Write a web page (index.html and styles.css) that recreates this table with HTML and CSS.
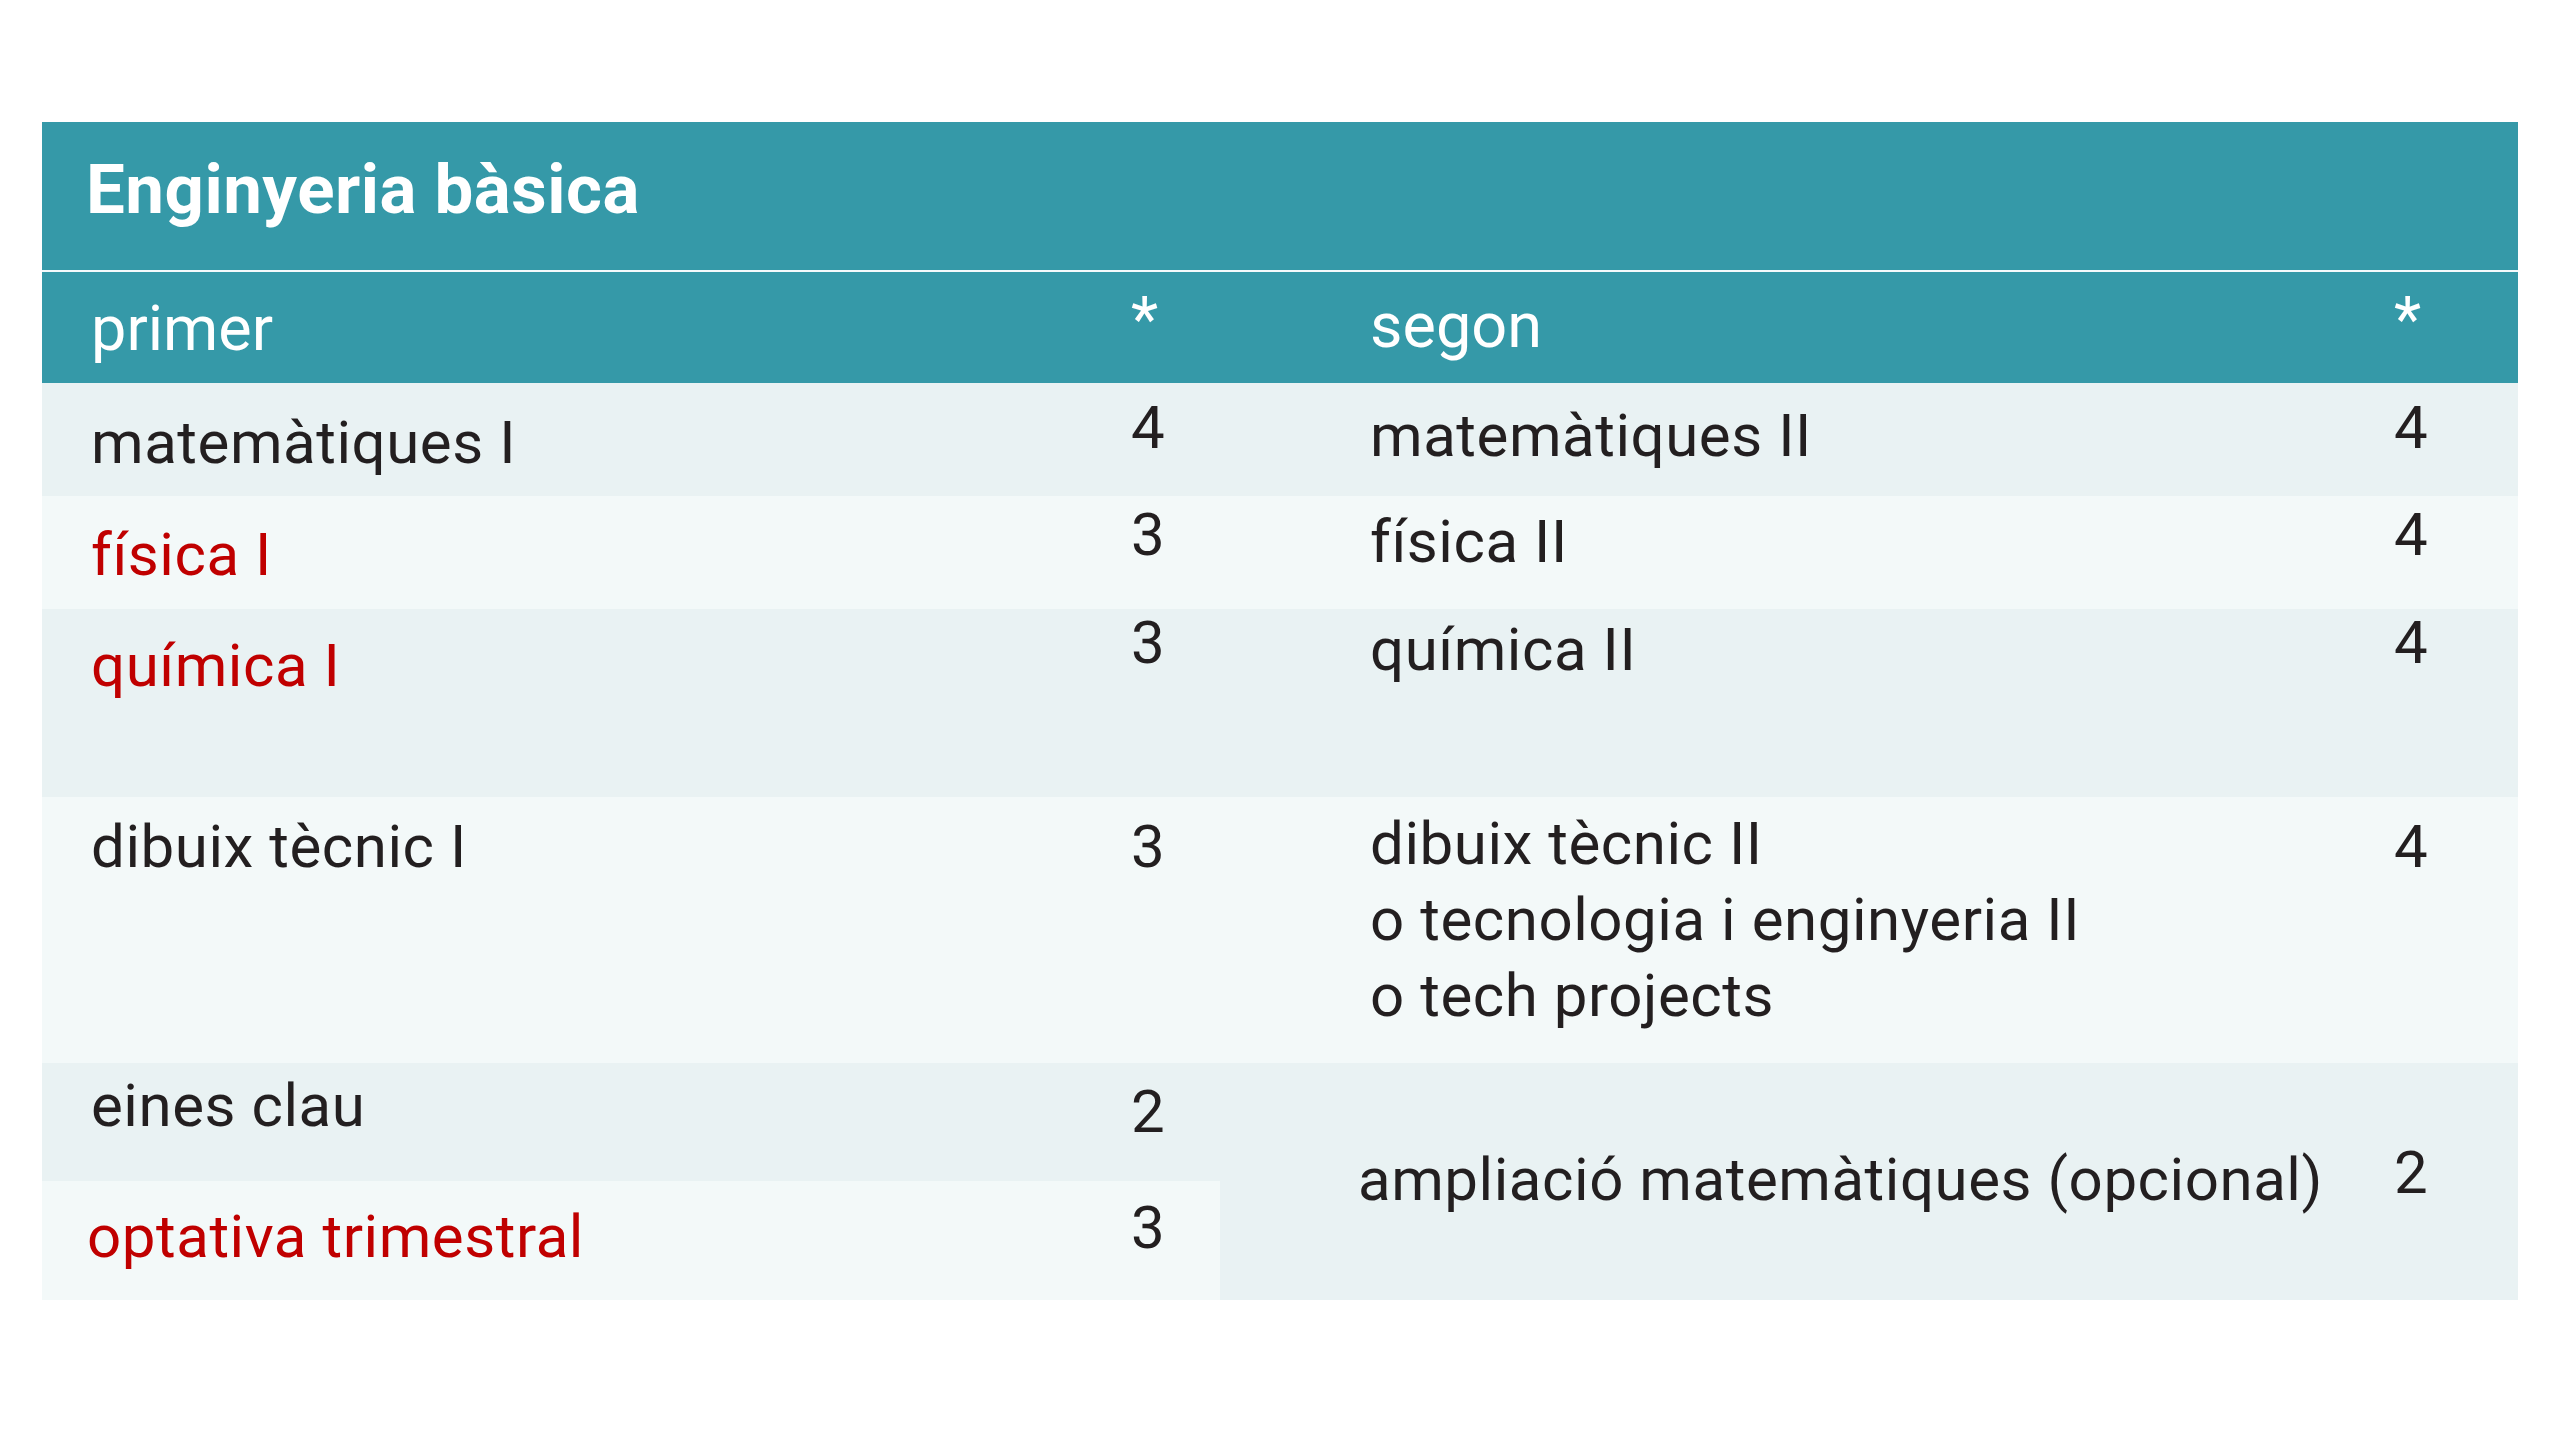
FILE: index.html
```html
<!DOCTYPE html>
<html lang="ca">
<head>
<meta charset="utf-8">
<title>Enginyeria bàsica</title>
<link rel="stylesheet" href="styles.css">
</head>
<body>
<section class="card">
  <h1 class="title">Enginyeria bàsica</h1>
  <div class="grid">
    <div class="hd txt-l p19">primer</div>
    <div class="hd num p10">*</div>
    <div class="hd txt-r p16">segon</div>
    <div class="hd num p10">*</div>

    <div class="c dark txt-l p22">matemàtiques I</div>
    <div class="c dark num p15">4</div>
    <div class="c dark txt-r p15">matemàtiques II</div>
    <div class="c dark num p15">4</div>

    <div class="c light txt-l red p21">física I</div>
    <div class="c light num p9">3</div>
    <div class="c light txt-r p8">física II</div>
    <div class="c light num p9">4</div>

    <div class="c dark txt-l red p19">química I</div>
    <div class="c dark num p4">3</div>
    <div class="c dark txt-r p3">química II</div>
    <div class="c dark num p4">4</div>

    <div class="c light txt-l p12">dibuix tècnic I</div>
    <div class="c light num p20">3</div>
    <div class="c light txt-r p9">dibuix tècnic II<br>o tecnologia i enginyeria II<br>o tech projects</div>
    <div class="c light num p20">4</div>

    <div class="c dark txt-l p5">eines clau</div>
    <div class="c dark num p19">2</div>
    <div class="c dark txt-amp span2 p79">ampliació matemàtiques (opcional)</div>
    <div class="c dark num span2 p80">2</div>

    <div class="c light txt-o red p18">optativa trimestral</div>
    <div class="c light num p17">3</div>
  </div>
</section>
</body>
</html>
```

FILE: styles.css
```css
html, body {
  margin: 0;
  padding: 0;
  background: #ffffff;
}

body {
  font-family: Roboto, "Liberation Sans", Arial, sans-serif;
  color: #231f20;
}

.card {
  width: 2476px;
  margin: 122px 0 0 42px;
}

.title {
  margin: 0;
  height: 150px;
  box-sizing: border-box;
  padding: 28px 0 0 44px;
  background: #3599a8;
  color: #ffffff;
  font-size: 69px;
  line-height: 80px;
  font-weight: 700;
  letter-spacing: 0.5px;
  border-bottom: 2px solid #f4fafb;
}

.grid {
  display: grid;
  grid-template-columns: 1068px 110px 1150px 148px;
  grid-template-rows: 111px 113px 113px 188px 266px 118px 119px;
}

.hd {
  background: #3599a8;
  color: #ffffff;
  font-size: 63px;
  line-height: 76px;
  letter-spacing: 0;
}

.c {
  font-size: 60px;
  line-height: 76px;
  letter-spacing: 0.55px;
}

.c.num {
  line-height: 60px;
  letter-spacing: 0;
}

.dark {
  background: #e9f2f3;
}

.light {
  background: #f3f9f9;
}

.red {
  color: #c00000;
}

.txt-l {
  padding-left: 49px;
}

.txt-o {
  padding-left: 45px;
}

.txt-r {
  padding-left: 150px;
}

.txt-amp {
  padding-left: 138px;
}

.num {
  padding-left: 21px;
}

.grid > .num:nth-child(4n) {
  padding-left: 24px;
}

.span2 {
  grid-row: span 2;
}

.grid > .span2.num {
  padding-left: 24px;
}

.p3 { padding-top: 3px; }
.p4 { padding-top: 4px; }
.p5 { padding-top: 5px; }
.p8 { padding-top: 8px; }
.p9 { padding-top: 9px; }
.p10 { padding-top: 10px; }
.p12 { padding-top: 12px; }
.p15 { padding-top: 15px; }
.p16 { padding-top: 16px; }
.p17 { padding-top: 17px; }
.p18 { padding-top: 18px; }
.p19 { padding-top: 19px; }
.p20 { padding-top: 20px; }
.p21 { padding-top: 21px; }
.p22 { padding-top: 22px; }
.p79 { padding-top: 79px; }
.p80 { padding-top: 80px; }
```
